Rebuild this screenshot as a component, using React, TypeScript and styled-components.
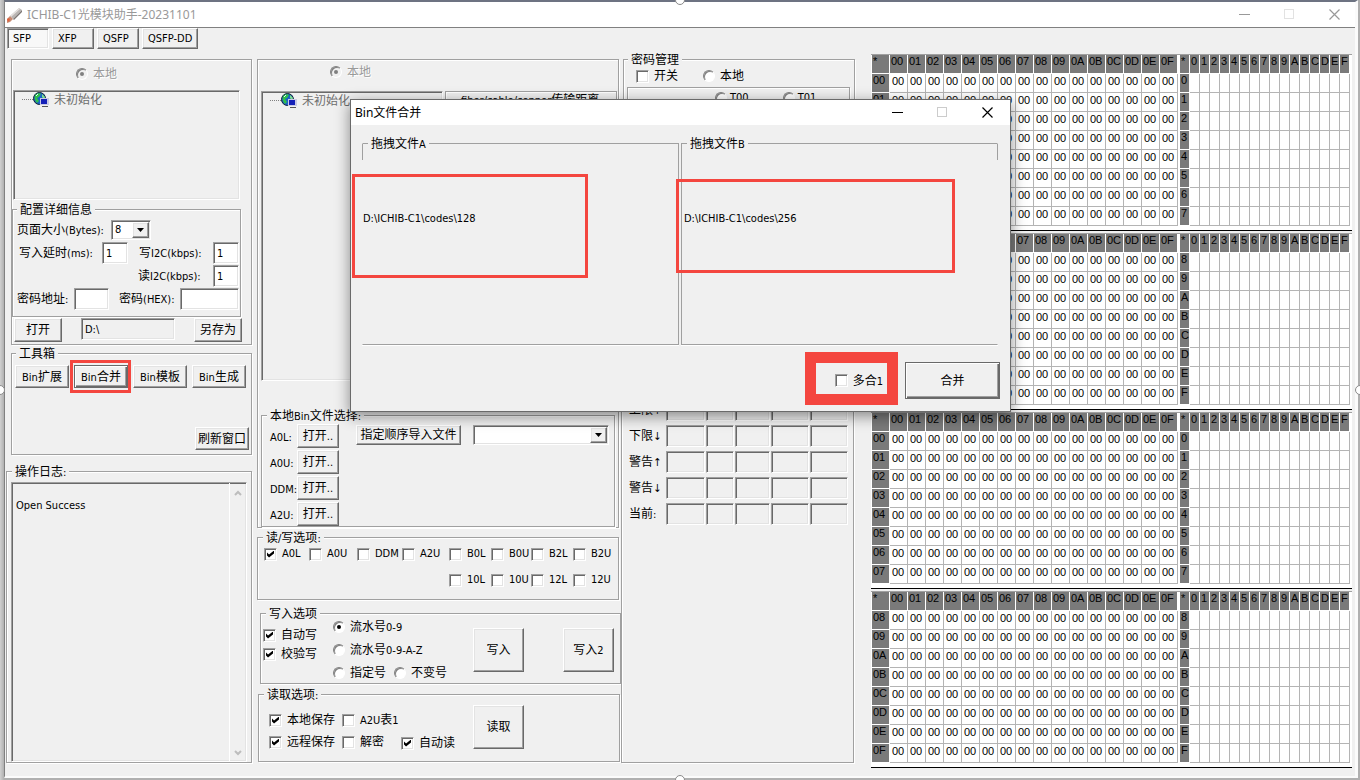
import React from 'react';
import styled, { createGlobalStyle, css } from 'styled-components';

const face = '#f0f0f0';
const line = '#a0a0a0';
const red = '#f4463f';

const GlobalStyle = createGlobalStyle`
  * { box-sizing: border-box; }
  body {
    margin: 0;
    background: #b0b0b0;
    color: #000;
    font-family: 'DejaVu Sans Condensed', 'Noto Sans', 'Noto Sans CJK SC', sans-serif;
    font-size: 11px;
    line-height: 14px;
  }
  button, input, select, textarea { font: inherit; color: inherit; }
`;

const raised = css`
  border: 1px solid;
  border-color: #fff #696969 #696969 #fff;
  box-shadow: inset -1px -1px 0 ${line}, inset 1px 1px 0 #e3e3e3;
`;

const sunken = css`
  border: 1px solid;
  border-color: ${line} #fff #fff ${line};
  box-shadow: inset 1px 1px 0 #696969, inset -1px -1px 0 #e3e3e3;
`;

const etched = css`
  border: 1px solid ${line};
  box-shadow: 1px 1px 0 #fff, inset 1px 1px 0 #fff;
`;

/* ---------- text ---------- */

const Han = styled.span`
  font-family: 'Noto Sans CJK SC', sans-serif;
  font-size: 12px;
`;

/* Chinese runs are one pixel larger than the Latin text around them. */
function Txt({ children }: { children: string }) {
  const parts = children.split(/([\u4e00-\u9fff]+)/);
  return <span>{parts.map((p, i) => (i % 2 ? <Han key={i}>{p}</Han> : p))}</span>;
}

/* ---------- window frame ---------- */

const Page = styled.div`
  position: relative;
  overflow: hidden;
  display: flex;
  min-height: 100vh;
  padding: 0 2px 2px 4px;
  background: linear-gradient(90deg, #d0d0d0 0, #b0b0b0 4px, #b0b0b0 100%);
`;

const Shell = styled.div`
  flex: 1;
  display: flex;
  flex-direction: column;
  background: ${face};
  border-style: solid;
  border-width: 2px 3px 2px 1px;
  border-color: #6d7382 #fbfbfb #fbfbfb #808080;
`;

const TitleBar = styled.header`
  display: flex;
  align-items: center;
  height: 26px;
  padding: 0 13px 0 1px;
  background: #fff;
  border-bottom: 1px solid #808080;
  color: #999;
  font-family: 'Noto Sans', 'Noto Sans CJK SC', sans-serif;
  font-size: 12px;
`;

const TitleText = styled.h1`
  flex: 1;
  margin: 0 0 0 4px;
  font-size: 12px;
  font-weight: 400;
`;

const CaptionButtons = styled.div`
  display: flex;
  gap: 29px;
`;

const CaptionButton = styled.button`
  display: flex;
  align-items: center;
  justify-content: center;
  width: 16px;
  height: 16px;
  padding: 0;
  border: 0;
  background: none;
`;

const Handle = styled.span<{ $side: 'left' | 'right' | 'top' | 'bottom' }>`
  position: absolute;
  z-index: 3;
  width: 10px;
  height: 10px;
  border: 1px solid #8a8a8a;
  border-radius: 50%;
  background: #fff;
  ${({ $side }) =>
    $side === 'left' || $side === 'right'
      ? `top: calc(50% - 5px); ${$side}: -5px;`
      : `left: calc(50% - 5px); ${$side}: -5px;`}
`;

/* ---------- shared controls ---------- */

const Tabs = styled.nav`
  display: flex;
  gap: 3px;
  padding-left: 2px;
`;

const Tab = styled.button<{ $active?: boolean; $width?: number }>`
  width: ${({ $width }) => $width ?? 42}px;
  height: 21px;
  padding: 0 0 0 5px;
  text-align: left;
  ${({ $active }) => ($active ? sunken : raised)}
  background: ${({ $active }) => ($active ? '#f8f8f8' : face)};
`;

const Button = styled.button<{ $w: number; $h: number; $focus?: boolean }>`
  flex: none;
  width: ${({ $w }) => $w}px;
  height: ${({ $h }) => $h}px;
  padding: 0;
  background: ${face};
  white-space: nowrap;
  ${raised}
  ${({ $focus }) =>
    $focus &&
    css`
      border-color: #696969;
      box-shadow: inset 1px 1px 0 #fff, inset -1px -1px 0 #696969, inset -2px -2px 0 ${line};
    `}
`;

const Field = styled.input<{ $w?: number; $gray?: boolean }>`
  flex: none;
  width: ${({ $w }) => ($w ? `${$w}px` : '100%')};
  height: 22px;
  padding: 0 3px;
  background: ${({ $gray }) => ($gray ? face : '#fff')};
  ${sunken}
`;

const Combo = styled.span<{ $w: number }>`
  display: flex;
  width: ${({ $w }) => $w}px;
  height: 20px;
  padding: 1px;
  background: #fff;
  ${sunken}
  select {
    flex: 1;
    min-width: 0;
    padding: 0 2px;
    border: 0;
    background: none;
    appearance: none;
  }
`;

const ComboArrow = styled.span`
  display: flex;
  align-items: center;
  justify-content: center;
  width: 17px;
  background: ${face};
  ${raised}
`;

const Arrow = () => (
  <ComboArrow aria-hidden="true">
    <svg width="7" height="4" viewBox="0 0 7 4">
      <path d="M0 0h7L3.500 4z" fill="#000" />
    </svg>
  </ComboArrow>
);

const Group = styled.fieldset`
  display: block;
  min-width: 0;
  margin: 0;
  padding: 0;
  ${etched}
`;

const Legend = styled.legend`
  height: 14px;
  margin-left: 5px;
  padding: 0 3px;
  background: ${face};
  white-space: nowrap;
`;

const Choice = styled.label<{ $gap?: number; $muted?: boolean }>`
  display: inline-flex;
  align-items: center;
  gap: ${({ $gap }) => $gap ?? 5}px;
  white-space: nowrap;
  color: ${({ $muted }) => ($muted ? '#999' : '#000')};
  ${({ $muted }) => $muted && 'text-shadow: 1px 1px 0 #fff;'}
`;

const Box = styled.input.attrs({ type: 'checkbox' })`
  flex: none;
  width: 13px;
  height: 13px;
  margin: 0;
  appearance: none;
  background: #fff;
  ${sunken}
  &:checked::after {
    content: '';
    display: block;
    width: 7px;
    height: 7px;
    margin: 2px;
    background: #000;
    clip-path: polygon(0 29%, 29% 57%, 100% 0, 100% 43%, 29% 100%, 0 71%);
  }
`;

const Dot = styled.input.attrs({ type: 'radio' })`
  flex: none;
  width: 12px;
  height: 12px;
  margin: 0;
  appearance: none;
  border: 1px solid;
  border-color: #808080 #fff #fff #808080;
  border-radius: 50%;
  background: #fff;
  box-shadow: inset 1px 1px 0 #808080;
  &:disabled {
    background: ${face};
  }
  &:checked::after {
    content: '';
    display: block;
    width: 4px;
    height: 4px;
    margin: 3px;
    border-radius: 50%;
    background: #000;
  }
  &:checked:disabled::after {
    background: #808080;
  }
`;

/* ---------- main columns ---------- */

const Body = styled.main`
  flex: 1;
  display: grid;
  grid-template-columns: 246px 364px minmax(235px, 1fr) 484px;
  padding: 4px 0 8px 1px;
`;

const Left = styled.section`
  display: flex;
  flex-direction: column;
  padding: 6px 0 5px;
`;

const Middle = styled.section`
  display: flex;
  flex-direction: column;
  margin: 0 -5px 0 5px;
  padding-top: 6px;
`;

const Right = styled.section`
  display: flex;
  flex-direction: column;
  margin: -1px 16px 5px 5px;
`;

const Panel = styled.div`
  display: flex;
  flex-direction: column;
  ${etched}
`;

const DevicePanel = styled(Panel)`
  margin-left: 5px;
  padding-bottom: 2px;
`;

const SourceRow = styled.div<{ $left: number; $h: number; $gap: number }>`
  display: flex;
  height: ${({ $h }) => $h}px;
  padding: 0 0 ${({ $gap }) => $gap}px ${({ $left }) => $left}px;
`;

const Tree = styled.div`
  display: flex;
  align-items: flex-start;
  padding: 1px 0 0 8px;
  color: #6d6d6d;
  ${sunken}
`;

const DeviceTree = styled(Tree)`
  height: 110px;
  margin: 0 11px 0 1px;
`;

const RemoteTree = styled(Tree)`
  width: 182px;
`;

const TreeDots = styled.span`
  width: 11px;
  margin-top: 7px;
  border-top: 1px dotted #808080;
`;

const TreeLabel = styled.span`
  margin-left: 5px;
`;

function TreeNode() {
  return (
    <>
      <TreeDots />
      <svg width="16" height="16" viewBox="0 0 16 16" aria-hidden="true">
        <circle cx="6.500" cy="6.500" r="6" fill="#1b62c4" stroke="#123" />
        <path d="M2 3c2-2 5-2 6-1L6 5 4 6l2 3-2 2C2 9 1 6 2 3z" fill="#2fc04a" />
        <path d="M9 2l3 3-1 2-2-2z" fill="#7fe08a" />
        <path d="M3 4l2-2" stroke="#dff5ff" />
        <rect x="7" y="6" width="9" height="7" fill="#c9c9e4" />
        <rect x="8" y="7" width="6" height="5" fill="#1420b8" />
        <path d="M9 14h6v1H9z" fill="#555" />
      </svg>
      <TreeLabel>
        <Txt>未初始化</Txt>
      </TreeLabel>
    </>
  );
}

const ConfigGroup = styled(Group)`
  margin: 2px 10px 0 0;
  min-height: 115px;
  ${Legend} {
    margin-left: 4px;
  }
`;

const ConfigRows = styled.div`
  display: flex;
  flex-direction: column;
  gap: 1px;
  padding: 3px 1px 0 4px;
`;

const ConfigRow = styled.div<{ $end?: boolean }>`
  display: flex;
  align-items: center;
  height: 22px;
  ${({ $end }) => $end && 'justify-content: flex-end;'}
`;

const FieldLabel = styled.label<{ $w: number; $pad?: number; $left?: number }>`
  width: ${({ $w }) => $w}px;
  margin-left: ${({ $left }) => $left ?? 0}px;
  padding-left: ${({ $pad }) => $pad ?? 0}px;
  white-space: nowrap;
`;

const FileRow = styled.div`
  display: flex;
  justify-content: space-between;
  padding: 1px 9px 0 2px;
`;

const ToolGroup = styled(Group)`
  margin: 1px 0 0 5px;
  ${Legend} {
    margin-left: 4px;
  }
`;

const ToolBody = styled.div`
  display: flex;
  flex-direction: column;
  justify-content: space-between;
  height: 94px;
  padding: 5px 2px 4px 3px;
`;

const ToolRow = styled.div<{ $end?: boolean }>`
  display: flex;
  gap: 5px;
  ${({ $end }) => $end && 'justify-content: flex-end;'}
`;

const Marked = styled.span`
  position: relative;
  display: flex;
  &::after {
    content: '';
    position: absolute;
    inset: -5px -3px -5px -4px;
    border: 3px solid ${red};
    pointer-events: none;
  }
`;

const LogGroup = styled(Group)`
  flex: 1;
  margin-top: 9px;
  ${Legend} {
    margin-left: 5px;
  }
`;

const LogBox = styled.div`
  display: flex;
  height: calc(100% - 4px);
  min-height: 278px;
  margin: 4px 4px 0;
  ${sunken}
`;

const LogText = styled.textarea`
  flex: 1;
  min-width: 0;
  padding: 2px 4px;
  border: 0;
  background: none;
  resize: none;
  outline: none;
`;

const LogScroll = styled.div`
  display: flex;
  flex-direction: column;
  justify-content: space-between;
  align-items: center;
  width: 17px;
  padding: 7px 0 5px;
  border-left: 1px solid #fff;
`;

const Chevron = ({ down }: { down?: boolean }) => (
  <svg width="8" height="6" viewBox="0 0 8 6" aria-hidden="true">
    <path d={down ? 'M1 1l3 3 3-3' : 'M1 5l3-3 3 3'} fill="none" stroke="#bdbdbd" strokeWidth="2" />
  </svg>
);

/* ---------- middle column ---------- */

const RemotePanel = styled(Panel)`
  width: 362px;
`;

const SplitRow = styled.div`
  display: flex;
  gap: 2px;
  height: 290px;
  padding: 0 1px 0 3px;
`;

const DistanceBox = styled.div`
  flex: 1;
  padding-left: 15px;
  ${etched}
`;

const BinGroup = styled(Group)`
  margin: 27px 3px 0;
  min-height: 118px;
`;

const BinLayout = styled.div`
  display: flex;
  align-items: flex-start;
  padding: 2px 5px 0 8px;
`;

const BinList = styled.div`
  display: grid;
  grid-template-columns: 27px 42px;
  gap: 2px 0;
  align-items: center;
  margin-right: 17px;
`;

const BinName = styled.span`
  padding-top: 4px;
`;

const BinTools = styled.div`
  flex: 1;
  display: flex;
  justify-content: space-between;
  padding-top: 1px;
`;

const OptionGroup = styled(Group)`
  width: 362px;
  margin-top: 2px;
`;

const FlagGrid = styled.div`
  display: grid;
  grid-template-columns: 45px 48px 45px 47px 42px 40px 42px 1fr;
  grid-auto-rows: 18px;
  row-gap: 8px;
  height: 55px;
  padding: 1px 0 0 6px;
  > :nth-child(9) {
    grid-column: 5;
  }
`;

const WriteGroup = styled(Group)`
  width: 361px;
  margin: 6px 0 0 3px;
`;

const WriteLayout = styled.div`
  display: grid;
  grid-template-columns: 70px 140px 51px 90px;
  height: 63px;
  padding: 1px 0 0 2px;
  > :last-child {
    margin-left: 39px;
  }
`;

const Checks = styled.div<{ $top: number; $gap: number }>`
  display: flex;
  flex-direction: column;
  align-items: flex-start;
  gap: ${({ $gap }) => $gap}px;
  padding-top: ${({ $top }) => $top}px;
`;

const SerialModes = styled.div`
  display: flex;
  flex-direction: column;
  gap: 11px;
`;

const SerialRow = styled.div`
  display: flex;
  gap: 8px;
  height: 12px;
`;

const BigButton = styled(Button).attrs({ $w: 51, $h: 44 })`
  margin-top: 7px;
`;

const ReadGroup = styled(Group)`
  width: 362px;
  margin: 3px 0 0 1px;
`;

const ReadLayout = styled.div`
  display: grid;
  grid-template-columns: 73px 59px 72px 51px;
  height: 60px;
  padding: 1px 0 0 10px;
  ${BigButton} {
    margin-top: 3px;
  }
`;

/* ---------- password and threshold column ---------- */

const PasswordGroup = styled(Group)`
  height: 330px;
  margin-left: 2px;
  ${Legend} {
    margin-left: 4px;
  }
`;

const PasswordRow = styled.div`
  display: flex;
  gap: 25px;
  height: 20px;
  padding-left: 12px;
`;

const TableChoice = styled.div`
  display: flex;
  gap: 34px;
  height: 200px;
  margin: 1px 4px 0 3px;
  padding: 3px 0 0 87px;
  align-items: flex-start;
  ${etched}
`;

const ThresholdPanel = styled(Panel)`
  flex: 1;
  gap: 4px;
  margin: 2px 1px 0 0;
  padding: 14px 5px 0 7px;
`;

const ThresholdRow = styled.div`
  display: grid;
  grid-template-columns: 36px 39px 28px 35px 38px 38px;
  column-gap: 1px;
  align-items: center;
  white-space: nowrap;
`;

/* ---------- hex dump ---------- */

const HexColumn = styled.section`
  padding-top: 1px;
`;

const HexBlock = styled.div`
  display: flex;
  gap: 2px;
  width: 481px;
  padding: 0 0 4px 1px;
  background: #fff;
  border-top: 1px solid ${line};
  border-bottom: 1px solid #000;
  & + & {
    margin-top: 2px;
  }
`;

const HexTable = styled.table<{ $w: number }>`
  width: ${({ $w }) => $w}px;
  table-layout: fixed;
  border-collapse: separate;
  border-spacing: 0;
  font-family: 'Liberation Sans', sans-serif;
  line-height: 13px;
  th,
  td {
    height: 19px;
    padding: 0;
    font-weight: 400;
    text-align: left;
    vertical-align: top;
    white-space: nowrap;
  }
  th {
    padding-left: 1px;
    background: #7a7a7a;
    border-right: 1px solid #fff;
    border-bottom: 1px solid #fff;
  }
  td {
    padding: 1px 0 0 2px;
    border-right: 1px solid #b4b4b4;
    border-bottom: 1px solid #b4b4b4;
  }
`;

const HEX = '0123456789ABCDEF'.split('');

function Dump({ start }: { start: number }) {
  const rows = HEX.slice(start, start + 8);
  return (
    <HexBlock>
      <HexTable $w={306}>
        <thead>
          <tr>
            <th>*</th>
            {HEX.map((h) => (
              <th key={h}>{`0${h}`}</th>
            ))}
          </tr>
        </thead>
        <tbody>
          {rows.map((r) => (
            <tr key={r}>
              <th>{`0${r}`}</th>
              {HEX.map((h) => (
                <td key={h}>00</td>
              ))}
            </tr>
          ))}
        </tbody>
      </HexTable>
      <HexTable $w={170}>
        <thead>
          <tr>
            <th>*</th>
            {HEX.map((h) => (
              <th key={h}>{h}</th>
            ))}
          </tr>
        </thead>
        <tbody>
          {rows.map((r) => (
            <tr key={r}>
              <th>{r}</th>
              {HEX.map((h) => (
                <td key={h} />
              ))}
            </tr>
          ))}
        </tbody>
      </HexTable>
    </HexBlock>
  );
}

/* ---------- dialog ---------- */

const Dialog = styled.section`
  position: absolute;
  z-index: 2;
  top: 99px;
  left: 350px;
  width: 661px;
  background: ${face};
  border: 1px solid #6a6a6a;
  box-shadow: 0 4px 14px rgba(0, 0, 0, 0.45);
`;

const DialogTitle = styled(TitleBar)`
  height: 25px;
  padding: 0 15px 0 0;
  border: 0;
  color: #000;
`;

const DropAreas = styled.div`
  display: grid;
  grid-template-columns: 1fr 1fr;
  gap: 2px;
  padding: 11px 12px 0 11px;
`;

const DropGroup = styled(Group)<{ $side: 'left' | 'right' }>`
  min-height: 209px;
  border-${({ $side }) => $side}-color: transparent;
  box-shadow: 0 1px 0 #fff;
  background: linear-gradient(${line}, ${line}) ${({ $side }) => $side} top / 1px 17px no-repeat border-box;
`;

const FilePath = styled.p<{ $pad?: number }>`
  margin: 62px 0 0;
  padding-left: ${({ $pad }) => $pad ?? 0}px;
`;

const DialogFooter = styled.footer`
  display: flex;
  align-items: center;
  justify-content: flex-end;
  gap: 22px;
  padding: 17px 10px 12px;
`;

const Mark = styled.span<{ $x: number; $y: number; $w: number; $h: number; $thick?: number }>`
  position: absolute;
  left: ${({ $x }) => $x}px;
  top: ${({ $y }) => $y}px;
  width: ${({ $w }) => $w}px;
  height: ${({ $h }) => $h}px;
  border: ${({ $thick }) => $thick ?? 3}px solid ${red};
  pointer-events: none;
`;

/* ---------- content ---------- */

const FLAGS = ['A0L', 'A0U', 'DDM', 'A2U', 'B0L', 'B0U', 'B2L', 'B2U', '10L', '10U', '12L', '12U'];
const BINS = ['A0L', 'A0U', 'DDM', 'A2U'];
const LIMITS = ['上限↑', '下限↓', '警告↑', '警告↓', '当前:'];

function Captions({ edge, max }: { edge: string; max: string }) {
  return (
    <CaptionButtons>
      <CaptionButton aria-label="最小化">
        <svg width="11" height="11">
          <path d="M0 5.500h11" stroke={edge} />
        </svg>
      </CaptionButton>
      <CaptionButton aria-label="最大化">
        <svg width="11" height="11">
          <rect x=".5" y=".5" width="9" height="9" fill="none" stroke={max} />
        </svg>
      </CaptionButton>
      <CaptionButton aria-label="关闭">
        <svg width="11" height="11">
          <path d="M.5.5l10 10M10.500.5l-10 10" stroke={edge} strokeWidth="1.200" />
        </svg>
      </CaptionButton>
    </CaptionButtons>
  );
}

function DeviceColumn() {
  return (
    <Left>
      <DevicePanel>
        <SourceRow $left={64} $h={30} $gap={2}>
          <Choice $muted>
            <Dot name="device" defaultChecked disabled />
            <Txt>本地</Txt>
          </Choice>
        </SourceRow>
        <DeviceTree>
          <TreeNode />
        </DeviceTree>
        <ConfigGroup>
          <Legend>
            <Txt>配置详细信息</Txt>
          </Legend>
          <ConfigRows>
            <ConfigRow>
              <FieldLabel $w={94} htmlFor="page-size">
                <Txt>页面大小(Bytes):</Txt>
              </FieldLabel>
              <Combo $w={40}>
                <select id="page-size">
                  <option>8</option>
                </select>
                <Arrow />
              </Combo>
            </ConfigRow>
            <ConfigRow>
              <FieldLabel $w={85} $pad={2} htmlFor="delay">
                <Txt>写入延时(ms):</Txt>
              </FieldLabel>
              <Field id="delay" $w={26} defaultValue="1" />
              <FieldLabel $w={74} $left={11} htmlFor="write-rate">
                <Txt>写I2C(kbps):</Txt>
              </FieldLabel>
              <Field id="write-rate" $w={26} defaultValue="1" />
            </ConfigRow>
            <ConfigRow $end>
              <FieldLabel $w={75} htmlFor="read-rate">
                <Txt>读I2C(kbps):</Txt>
              </FieldLabel>
              <Field id="read-rate" $w={26} defaultValue="1" />
            </ConfigRow>
            <ConfigRow>
              <FieldLabel $w={57} htmlFor="pw-addr">
                <Txt>密码地址:</Txt>
              </FieldLabel>
              <Field id="pw-addr" $w={35} />
              <FieldLabel $w={61} $left={10} htmlFor="pw-hex">
                <Txt>密码(HEX):</Txt>
              </FieldLabel>
              <Field id="pw-hex" $w={59} />
            </ConfigRow>
          </ConfigRows>
        </ConfigGroup>
        <FileRow>
          <Button $w={48} $h={24}>
            <Txt>打开</Txt>
          </Button>
          <Field $w={94} $gray readOnly aria-label="路径" defaultValue="D:\" />
          <Button $w={48} $h={24}>
            <Txt>另存为</Txt>
          </Button>
        </FileRow>
      </DevicePanel>

      <ToolGroup>
        <Legend>
          <Txt>工具箱</Txt>
        </Legend>
        <ToolBody>
          <ToolRow>
            <Button $w={54} $h={23}>
              <Txt>Bin扩展</Txt>
            </Button>
            <Marked>
              <Button $w={54} $h={23} $focus>
                <Txt>Bin合并</Txt>
              </Button>
            </Marked>
            <Button $w={54} $h={23}>
              <Txt>Bin模板</Txt>
            </Button>
            <Button $w={54} $h={23}>
              <Txt>Bin生成</Txt>
            </Button>
          </ToolRow>
          <ToolRow $end>
            <Button $w={54} $h={23}>
              <Txt>刷新窗口</Txt>
            </Button>
          </ToolRow>
        </ToolBody>
      </ToolGroup>

      <LogGroup>
        <Legend>
          <Txt>操作日志:</Txt>
        </Legend>
        <LogBox>
          <LogText readOnly aria-label="操作日志" defaultValue={'\nOpen Success'} />
          <LogScroll>
            <Chevron />
            <Chevron down />
          </LogScroll>
        </LogBox>
      </LogGroup>
    </Left>
  );
}

function TransferColumn() {
  return (
    <Middle>
      <RemotePanel>
        <SourceRow $left={72} $h={31} $gap={8}>
          <Choice $muted>
            <Dot name="remote" defaultChecked disabled />
            <Txt>本地</Txt>
          </Choice>
        </SourceRow>
        <SplitRow>
          <RemoteTree>
            <TreeNode />
          </RemoteTree>
          <DistanceBox>
            <Txt>fiber/cable/copper传输距离:</Txt>
          </DistanceBox>
        </SplitRow>
        <BinGroup>
          <Legend>
            <Txt>本地Bin文件选择:</Txt>
          </Legend>
          <BinLayout>
            <BinList>
              {BINS.map((b) => (
                <React.Fragment key={b}>
                  <BinName>{b}:</BinName>
                  <Button $w={42} $h={24}>
                    <Txt>打开..</Txt>
                  </Button>
                </React.Fragment>
              ))}
            </BinList>
            <BinTools>
              <Button $w={105} $h={20}>
                <Txt>指定顺序导入文件</Txt>
              </Button>
              <Combo $w={136}>
                <select aria-label="文件" />
                <Arrow />
              </Combo>
            </BinTools>
          </BinLayout>
        </BinGroup>
      </RemotePanel>

      <OptionGroup>
        <Legend>
          <Txt>读/写选项:</Txt>
        </Legend>
        <FlagGrid>
          {FLAGS.map((f, i) => (
            <Choice key={f}>
              <Box defaultChecked={i === 0} />
              {f}
            </Choice>
          ))}
        </FlagGrid>
      </OptionGroup>

      <WriteGroup>
        <Legend>
          <Txt>写入选项</Txt>
        </Legend>
        <WriteLayout>
          <Checks $top={6} $gap={3}>
            <Choice>
              <Box defaultChecked />
              <Txt>自动写</Txt>
            </Choice>
            <Choice>
              <Box defaultChecked />
              <Txt>校验写</Txt>
            </Choice>
          </Checks>
          <SerialModes>
            <SerialRow>
              <Choice>
                <Dot name="serial" defaultChecked />
                <Txt>流水号0-9</Txt>
              </Choice>
            </SerialRow>
            <SerialRow>
              <Choice>
                <Dot name="serial" />
                <Txt>流水号0-9-A-Z</Txt>
              </Choice>
            </SerialRow>
            <SerialRow>
              <Choice>
                <Dot name="serial" />
                <Txt>指定号</Txt>
              </Choice>
              <Choice>
                <Dot name="serial" />
                <Txt>不变号</Txt>
              </Choice>
            </SerialRow>
          </SerialModes>
          <BigButton>
            <Txt>写入</Txt>
          </BigButton>
          <BigButton>
            <Txt>写入2</Txt>
          </BigButton>
        </WriteLayout>
      </WriteGroup>

      <ReadGroup>
        <Legend>
          <Txt>读取选项:</Txt>
        </Legend>
        <ReadLayout>
          <Checks $top={10} $gap={6}>
            <Choice>
              <Box defaultChecked />
              <Txt>本地保存</Txt>
            </Choice>
            <Choice>
              <Box defaultChecked />
              <Txt>远程保存</Txt>
            </Choice>
          </Checks>
          <Checks $top={10} $gap={6}>
            <Choice>
              <Box />
              <Txt>A2U表1</Txt>
            </Choice>
            <Choice>
              <Box />
              <Txt>解密</Txt>
            </Choice>
          </Checks>
          <Checks $top={33} $gap={6}>
            <Choice>
              <Box defaultChecked />
              <Txt>自动读</Txt>
            </Choice>
          </Checks>
          <BigButton>
            <Txt>读取</Txt>
          </BigButton>
        </ReadLayout>
      </ReadGroup>
    </Middle>
  );
}

function MonitorColumn() {
  return (
    <Right>
      <PasswordGroup>
        <Legend>
          <Txt>密码管理</Txt>
        </Legend>
        <PasswordRow>
          <Choice>
            <Box />
            <Txt>开关</Txt>
          </Choice>
          <Choice>
            <Dot name="pw" />
            <Txt>本地</Txt>
          </Choice>
        </PasswordRow>
        <TableChoice>
          <Choice $gap={3}>
            <Dot name="tbl" />
            T00
          </Choice>
          <Choice $gap={3}>
            <Dot name="tbl" />
            T01
          </Choice>
        </TableChoice>
      </PasswordGroup>
      <ThresholdPanel>
        {LIMITS.map((l) => (
          <ThresholdRow key={l}>
            <Txt>{l}</Txt>
            {[1, 2, 3, 4, 5].map((n) => (
              <Field key={n} $gray readOnly aria-label={`${l} ${n}`} />
            ))}
          </ThresholdRow>
        ))}
      </ThresholdPanel>
    </Right>
  );
}

function MergeDialog() {
  return (
    <Dialog role="dialog" aria-label="Bin文件合并">
      <DialogTitle>
        <TitleText as="h2">Bin文件合并</TitleText>
        <Captions edge="#000" max="#ccc" />
      </DialogTitle>
      <DropAreas>
        <DropGroup $side="left">
          <Legend>
            <Txt>拖拽文件A</Txt>
          </Legend>
          <FilePath>D:\ICHIB-C1\codes\128</FilePath>
        </DropGroup>
        <DropGroup $side="right">
          <Legend>
            <Txt>拖拽文件B</Txt>
          </Legend>
          <FilePath $pad={2}>D:\ICHIB-C1\codes\256</FilePath>
        </DropGroup>
      </DropAreas>
      <DialogFooter>
        <Choice>
          <Box />
          <Txt>多合1</Txt>
        </Choice>
        <Button $w={95} $h={37} $focus>
          <Txt>合并</Txt>
        </Button>
      </DialogFooter>
      <Mark $x={1} $y={74} $w={236} $h={104} />
      <Mark $x={325} $y={79} $w={279} $h={94} />
      <Mark $x={454} $y={252} $w={93} $h={53} $thick={11} />
    </Dialog>
  );
}

export default function App() {
  return (
    <Page>
      <GlobalStyle />
      <Shell>
        <TitleBar>
          <svg width="17" height="16" viewBox="0 0 17 16" aria-hidden="true">
            <path d="M4 9L13 1l3 2-9 9z" fill="#b9b5b3" />
            <path d="M4 9L13 1l1 1-9 8z" fill="#e6e2e0" />
            <path d="M7 12l9-9v2l-8 8z" fill="#7c7674" />
            <path d="M1 12l3-3 3 3-3 3-3 1z" fill="#c58a72" />
            <path d="M1 12l2-1 1 2-2 2z" fill="#e2603a" />
          </svg>
          <TitleText>ICHIB-C1光模块助手-20231101</TitleText>
          <Captions edge="#999" max="#e2e2e2" />
        </TitleBar>
        <Tabs>
          <Tab $active>SFP</Tab>
          <Tab>XFP</Tab>
          <Tab>QSFP</Tab>
          <Tab $width={56}>QSFP-DD</Tab>
        </Tabs>
        <Body>
          <DeviceColumn />
          <TransferColumn />
          <MonitorColumn />
          <HexColumn>
            <Dump start={0} />
            <Dump start={8} />
            <Dump start={0} />
            <Dump start={8} />
          </HexColumn>
        </Body>
      </Shell>
      <MergeDialog />
      <Handle $side="left" />
      <Handle $side="right" />
      <Handle $side="top" />
      <Handle $side="bottom" />
    </Page>
  );
}
